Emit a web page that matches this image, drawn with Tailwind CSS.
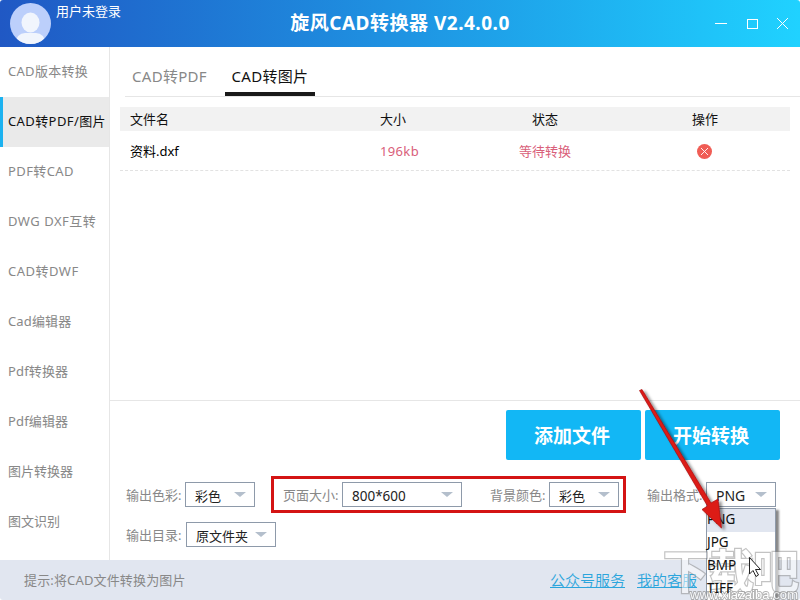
<!DOCTYPE html>
<html lang="zh-CN">
<head>
  <meta charset="UTF-8">
  <meta name="viewport" content="width=device-width, initial-scale=1.0">
  <title>旋风CAD转换器</title>
  <script src="https://cdn.jsdelivr.net/npm/@tailwindcss/browser@4"></script>
</head>
<body class="bg-white">

  <div class="relative w-[800px] h-[600px] overflow-hidden flex flex-col rounded-[3px] bg-white font-['Noto_Sans','Noto_Sans_CJK_SC',sans-serif] text-[13px] leading-5 text-[#888] whitespace-nowrap">

    <!-- Title bar -->
    <header class="h-[47px] shrink-0 grid grid-cols-[250px_300px_250px] bg-linear-to-r from-[#2058c4] via-[#1f93e2] to-[#20d2ff] text-white">
      <div class="flex pl-2.5 pt-[3px]">
        <svg class="w-[41px] h-[41px]" viewBox="0 0 41 41">
          <defs><clipPath id="avatar"><circle cx="20.5" cy="20.5" r="20.5"/></clipPath></defs>
          <circle cx="20.5" cy="20.5" r="20.5" fill="#bccffb"/>
          <g clip-path="url(#avatar)" fill="#f1f5fd">
            <ellipse cx="20.5" cy="19.5" rx="9" ry="10"/>
            <path d="M5 41Q7 30 15 30H26Q34 30 36 41Z"/>
          </g>
        </svg>
        <span class="ml-[5px] -mt-0.5">用户未登录</span>
      </div>
      <h1 class="text-center text-[19px] tracking-[0.5px] font-bold leading-[47px]">旋风CAD转换器 V2.4.0.0</h1>
      <div class="flex justify-end pr-[11px] pt-[17px]">
        <svg class="w-[75px] h-[14px]" viewBox="0 0 75 14" fill="none" stroke="#fff" stroke-width="1">
          <path d="M1 6.5h12"/>
          <rect x="33.5" y="2.5" width="10" height="9"/>
          <path d="M63 1l11 11M74 1L63 12"/>
        </svg>
      </div>
    </header>

    <div class="flex h-[513px] shrink-0">
      <!-- Sidebar -->
      <nav class="w-[110px] shrink-0 border-r border-[#e6e6e6] *:h-[50px] *:pl-2 *:leading-[49px]">
        <div class="tracking-[0.3px]">CAD版本转换</div>
        <div class="relative bg-[#eaeaea] text-[#111] tracking-[0.4px]"><i class="absolute left-0 top-0 w-[3px] h-full bg-[#1cb2f0]"></i>CAD转PDF/图片</div>
        <div class="tracking-[0.4px]">PDF转CAD</div>
        <div class="tracking-[0.5px]">DWG DXF互转</div>
        <div class="tracking-[0.5px]">CAD转DWF</div>
        <div class="tracking-[0.15px]">Cad编辑器</div>
        <div class="tracking-[0.15px]">Pdf转换器</div>
        <div class="tracking-[0.15px]">Pdf编辑器</div>
        <div>图片转换器</div>
        <div>图文识别</div>
      </nav>

      <main class="flex-1 flex flex-col">
        <!-- Tabs and file list -->
        <section class="h-[354px] border-b border-[#e6e6e6]">
          <div class="ml-[15px] h-[50px] flex border-b border-[#e6e6e6] text-[15px] tracking-[0.3px] leading-[58px]">
            <div class="pl-[7px] w-[100px]">CAD转PDF</div>
            <div class="w-[90px] h-[49px] text-center text-[#111] border-b-4 border-[#1a1a1a]">CAD转图片</div>
          </div>
          <div class="ml-2.5 mr-2.5 mt-2.5">
            <div class="h-6 grid grid-cols-[260px_85px_160px_160px] bg-[#f2f2f2] text-[#111] leading-6">
              <div class="pl-2.5">文件名</div>
              <div>大小</div>
              <div class="text-center">状态</div>
              <div class="text-center">操作</div>
            </div>
            <div class="h-[40px] grid grid-cols-[260px_85px_160px_160px] border-b border-dashed border-[#e2e2e2] text-[#d9607a] leading-10">
              <div class="pl-2.5 text-black">资料.dxf</div>
              <div class="tracking-[0.35px]">196kb</div>
              <div class="text-center">等待转换</div>
              <div class="flex justify-center items-center pr-0.5">
                <svg class="w-[15px] h-[15px]" viewBox="0 0 15 15"><circle cx="7.5" cy="7.5" r="7.5" fill="#f05d55"/><path d="M4 4l7 7M11 4l-7 7" stroke="#fff" stroke-width=".9"/></svg>
              </div>
            </div>
          </div>
        </section>

        <!-- Actions and output options -->
        <section class="flex-1">
          <div class="flex gap-1 justify-end pr-5 pt-[9px]">
            <button class="w-[135px] h-[50px] pt-0.5 pr-[3px] rounded-[2px] bg-[#12b7f5] text-white text-[19px] font-bold">添加文件</button>
            <button class="w-[135px] h-[50px] pt-0.5 pr-[3px] rounded-[2px] bg-[#12b7f5] text-white text-[19px] font-bold">开始转换</button>
          </div>
          <div class="mt-4 ml-4 h-[37px] flex items-center">
            <span class="w-[59px]">输出色彩:</span>
            <div class="w-[70px] h-[25px] border border-[#8e9aaa] flex items-center justify-between pl-[9px] pr-2 text-[#222]">
              <span class="mt-[3px]">彩色</span>
              <svg class="w-3 h-[5px]" viewBox="0 0 12 5"><path d="M0 0h12L6 5z" fill="#b4bfcc"/></svg>
            </div>
            <div class="ml-4 w-[355px] h-[37px] border-3 border-[#d41414] flex items-center pl-[9px]">
              <span class="w-[59px]">页面大小:</span>
              <div class="w-[120px] h-[25px] border border-[#8e9aaa] flex items-center justify-between pl-[9px] pr-2 text-[#222]">
                <span class="mt-[3px] text-[13.5px]">800*600</span>
                <svg class="w-3 h-[5px]" viewBox="0 0 12 5"><path d="M0 0h12L6 5z" fill="#b4bfcc"/></svg>
              </div>
              <span class="ml-7 w-[59px]">背景颜色:</span>
              <div class="w-[70px] h-[25px] border border-[#8e9aaa] flex items-center justify-between pl-[9px] pr-2 text-[#222]">
                <span class="mt-[3px]">彩色</span>
                <svg class="w-3 h-[5px]" viewBox="0 0 12 5"><path d="M0 0h12L6 5z" fill="#b4bfcc"/></svg>
              </div>
            </div>
            <span class="ml-[21px] w-[59px]">输出格式:</span>
            <div class="w-[70px] h-[25px] border border-[#8e9aaa] flex items-center justify-between pl-[9px] pr-2 text-[#222]">
              <span class="mt-[3px] text-[14px]">PNG</span>
              <svg class="w-3 h-[5px]" viewBox="0 0 12 5"><path d="M0 0h12L6 5z" fill="#b4bfcc"/></svg>
            </div>
          </div>
          <div class="mt-[9px] ml-4 h-[25px] flex items-center">
            <span class="w-[60px]">输出目录:</span>
            <div class="w-[90px] h-[25px] border border-[#8e9aaa] flex items-center justify-between pl-[9px] pr-2 text-[#222]">
              <span class="mt-[3px]">原文件夹</span>
              <svg class="w-3 h-[5px]" viewBox="0 0 12 5"><path d="M0 0h12L6 5z" fill="#b4bfcc"/></svg>
            </div>
          </div>
        </section>
      </main>
    </div>

    <!-- Status bar -->
    <footer class="h-10 shrink-0 flex bg-[#e1e6f0] leading-10">
      <span class="pl-6 w-[550px] tracking-[0.15px]">提示:将CAD文件转换为图片</span>
      <a class="w-[87px] text-[15px] font-[350] text-[#2ba5dc] underline">公众号服务</a>
      <a class="text-[15px] font-[350] text-[#2ba5dc] underline">我的客服</a>
    </footer>

    <!-- Open format menu, its labels stay above the watermark -->
    <div class="absolute left-[706px] top-[508px] w-[70px] h-[92px] border border-b-0 border-[#8e9aaa] bg-white text-[#111] text-[13.5px] leading-[21px] shadow-[3px_2px_2px_#888] *:h-[23px]">
      <div class="bg-[#e1e6f0]"><span class="relative z-10">PNG</span></div>
      <div><span class="relative z-10">JPG</span></div>
      <div><span class="relative z-10">BMP</span></div>
      <div><span class="relative z-10">TIFF</span></div>
    </div>

    <!-- Watermark -->
    <svg class="absolute left-0 top-0 w-[800px] h-[600px]" viewBox="0 0 800 600">
      <text x="663" y="588" class="font-['Noto_Sans_CJK_SC',sans-serif]" font-size="46" font-weight="700" textLength="136" fill="#fff" stroke="#888" stroke-width="2.4" paint-order="stroke" opacity=".5">下载吧</text>
      <text x="690" y="599" class="font-['Liberation_Sans',sans-serif]" font-size="13" textLength="108" fill="#fff" stroke="#999" stroke-width="1.8" paint-order="stroke" opacity=".75">www.xiazaiba.com</text>
    </svg>

    <!-- Arrow and pointer -->
    <svg class="absolute z-20 left-0 top-0 w-[800px] h-[600px]" viewBox="0 0 800 600">
      <defs>
        <filter id="shadow" x="-20%" y="-20%" width="140%" height="140%"><feDropShadow dx="3" dy="2" stdDeviation="1.5" flood-color="#000" flood-opacity=".45"/></filter>
      </defs>
      <path d="M639.5 390.5L642 389.5L711 503L718 499L721.5 528L702 509.5L707.5 506Z" fill="#dc1a17" stroke="#a90f0f" stroke-width=".7" filter="url(#shadow)"/>
      <path d="M749.5 557.5V574L753 570.5L756 576.5L758.5 575L755.5 569.5H760.5Z" fill="#fff" stroke="#222" stroke-width="1"/>
    </svg>
  </div>

</body>
</html>
